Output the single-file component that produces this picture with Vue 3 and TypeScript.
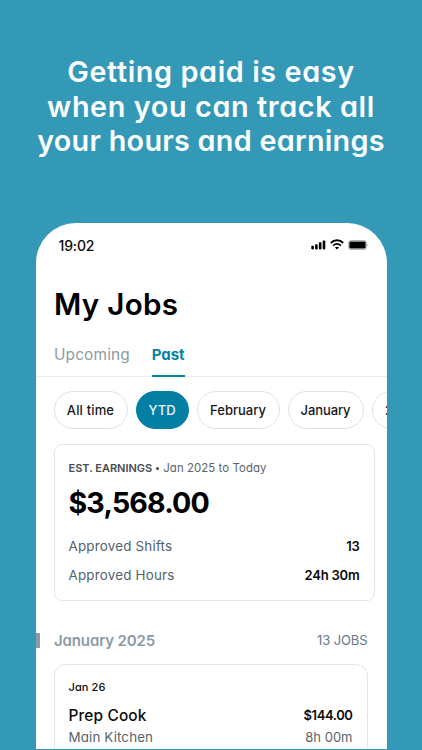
<script setup lang="ts">
interface Filter {
  label: string
  key: string
  active?: boolean
}

const headline: string[] = ['Getting paid is easy', 'when you can track all', 'your hours and earnings']

const filters: Filter[] = [
  { label: 'All time', key: 'all' },
  { label: 'YTD', key: 'ytd', active: true },
  { label: 'February', key: 'feb' },
  { label: 'January', key: 'jan' },
  { label: '2024', key: 'year' },
]

const totals = [
  { label: 'Approved Shifts', value: '13', key: 'shifts' },
  { label: 'Approved Hours', value: '24h 30m', key: 'hours' },
]
</script>

<template>
  <main class="page">
    <h1 class="headline">
      <span v-for="(line, i) in headline" :key="line" :class="['line', `line-${i + 1}`]">{{ line }}</span>
    </h1>

    <section class="phone">
      <header class="status">
        <span class="clock">19:02</span>
        <span class="indicators">
          <svg class="signal" width="15" height="10" viewBox="0 0 15 10">
            <rect x="0.3" y="5.8" width="2.6" height="3.6" rx="0.8" />
            <rect x="4.1" y="4.2" width="2.6" height="5.2" rx="0.8" />
            <rect x="7.9" y="2.3" width="2.6" height="7.1" rx="0.8" />
            <rect x="11.7" y="0.4" width="2.6" height="9" rx="0.8" />
          </svg>
          <svg class="wifi" width="14" height="11" viewBox="0 0 14 11">
            <path d="M0.8 4C4.3.4 9.7.4 13.2 4" />
            <path d="M3.2 6.6C5.4 4.5 8.6 4.5 10.8 6.6" />
            <path class="dot" d="M7 10.6 4.9 8.4C6 7.4 8 7.4 9.1 8.4Z" />
          </svg>
          <svg class="battery" width="21" height="10" viewBox="0 0 21 10">
            <rect x="0.6" y="0.5" width="17.8" height="9" rx="2.2" fill="#fff" stroke="#b5b5b5" stroke-width="1" />
            <rect x="1.4" y="1.4" width="16.2" height="7.2" rx="1.1" fill="#000" />
            <path d="M19.4 3.6c1.3.4 1.3 2.4 0 2.8z" fill="#b5b5b5" />
          </svg>
        </span>
      </header>

      <h2 class="title">My Jobs</h2>

      <nav class="tabs">
        <a class="tab upcoming">Upcoming</a>
        <a class="tab past">Past</a>
      </nav>

      <div class="filters">
        <button v-for="f in filters" :key="f.key" :class="['pill', f.key, { active: f.active }]">{{ f.label }}</button>
      </div>

      <article class="card earnings">
        <p class="caption">
          <strong>EST. EARNINGS</strong><i class="bullet"></i><span class="period">Jan 2025 to Today</span>
        </p>
        <p class="amount">$3,568.00</p>
        <p v-for="t in totals" :key="t.key" class="total">
          <span :class="['total-label', t.key]">{{ t.label }}</span>
          <b :class="['total-value', t.key]">{{ t.value }}</b>
        </p>
      </article>

      <div class="month">
        <i class="marker"></i>
        <h3>January 2025</h3>
        <span class="count">13 JOBS</span>
      </div>

      <article class="card job">
        <p class="date">Jan 26</p>
        <p class="row main"><span class="role">Prep Cook</span><b class="pay">$144.00</b></p>
        <p class="row sub"><span class="place">Main Kitchen</span><span class="duration">8h 00m</span></p>
      </article>
    </section>
  </main>
</template>

<style>
body {
  margin: 0;
  background: #3498b7;
}
</style>

<style scoped>
* {
  box-sizing: border-box;
}
p,
h1,
h2,
h3 {
  margin: 0;
  white-space: nowrap;
}
.page {
  width: 422px;
  height: 750px;
  overflow: hidden;
  display: flex;
  flex-direction: column;
  align-items: center;
  background: #3498b7;
  font-family: Inter, 'Liberation Sans', sans-serif;
  font-feature-settings: 'cv11' 1;
  color: #0b0b0c;
  border-bottom: 1px solid #3498b7;
}
.headline {
  flex: none;
  height: 223px;
  padding-top: 55px;
  color: #fafefe;
  font-size: 28.8px;
  font-weight: 600;
  line-height: 34.5px;
  letter-spacing: 0.6px;
  text-align: center;
}
.line {
  display: block;
}
.line-3 {
  letter-spacing: 0.26px;
}
.phone {
  flex: none;
  width: 351px;
  height: 526px;
  overflow: hidden;
  background: #fff;
  border-radius: 40px 40px 0 0;
}
.status {
  display: flex;
  justify-content: space-between;
  align-items: center;
  height: 45px;
  padding: 0 18px 0 23px;
}
.clock {
  font-size: 14px;
  font-weight: 500;
  letter-spacing: -0.15px;
}
.indicators {
  display: flex;
  align-items: center;
  gap: 4px;
  margin-top: -2px;
}
.indicators svg {
  display: block;
}
.wifi path {
  fill: none;
  stroke: #000;
  stroke-width: 2;
}
.wifi .dot {
  fill: #000;
  stroke: none;
}
.title {
  padding-left: 18.5px;
  margin-top: 17px;
  height: 38px;
  line-height: 38px;
  font-size: 29.6px;
  font-weight: 600;
  letter-spacing: 0.3px;
  color: #000;
}
.tabs {
  display: flex;
  gap: 22px;
  height: 54px;
  padding: 14px 0 0 18.5px;
  border-bottom: 1px solid #ededee;
}
.tab {
  height: 40px;
  line-height: 36px;
  font-size: 15.4px;
  letter-spacing: 0.15px;
  color: #8b9ba6;
}
.past {
  width: 33px;
  font-size: 15px;
  letter-spacing: -0.1px;
  color: #0682a5;
  font-weight: 700;
  border-bottom: 2px solid #0682a5;
  border-radius: 1px 1px 0 0;
}
.filters {
  display: flex;
  gap: 8px;
  margin: 14px 0 0 18px;
}
.pill {
  flex: none;
  height: 38px;
  padding: 0;
  border: 1px solid #dfe1e3;
  border-radius: 19px;
  background: #fff;
  font: inherit;
  font-feature-settings: normal;
  font-size: 13px;
  font-weight: 500;
  color: #17181a;
}
.pill.all {
  width: 74px;
  letter-spacing: 0.15px;
}
.pill.ytd {
  width: 53px;
}
.pill.feb {
  width: 83px;
}
.pill.jan {
  width: 76px;
  letter-spacing: -0.1px;
}
.pill.year {
  padding: 0 13px 0 12.5px;
}
.pill.active {
  background: #037fa3;
  border-color: #037fa3;
  color: #e8f6fa;
}
.card {
  border: 1px solid #e3e5e7;
  border-radius: 8px;
  background: #fff;
}
.earnings {
  width: 321px;
  height: 157px;
  margin: 15px 0 0 18px;
  padding: 15px 14px 0;
}
.caption {
  display: flex;
  align-items: center;
  height: 16px;
  font-size: 11px;
  color: #58646c;
}
.caption strong {
  font-weight: 600;
  color: #494b4e;
}
.period {
  font-size: 11.4px;
  letter-spacing: 0.08px;
}
.bullet {
  width: 3px;
  height: 3px;
  margin: 0 4px;
  border-radius: 50%;
  background: #494b4e;
}
.amount {
  height: 38px;
  margin: 8px 0 10px;
  line-height: 38px;
  font-size: 28.6px;
  font-weight: 700;
  letter-spacing: -0.85px;
  color: #000;
}
.total {
  display: flex;
  justify-content: space-between;
  height: 29px;
  line-height: 29px;
  font-size: 13px;
}
.total-label {
  font-size: 13.4px;
  letter-spacing: 0.2px;
  color: #51626d;
}
.total-value {
  font-weight: 600;
  letter-spacing: -0.2px;
}
.month {
  display: flex;
  align-items: center;
  height: 30px;
  margin-top: 24px;
  padding-right: 19px;
}
.marker {
  width: 4px;
  height: 15px;
  margin-right: 14.5px;
  background: #8b9ba6;
}
.month h3 {
  flex: 1;
  font-size: 15px;
  font-weight: 600;
  letter-spacing: -0.12px;
  color: #8b9ba6;
}
.count {
  font-size: 13px;
  letter-spacing: -0.1px;
  color: #66798a;
}
.job {
  width: 314px;
  height: 120px;
  margin: 9px 0 0 18px;
  padding: 13px 14px 0;
  border-radius: 12px;
}
.date {
  height: 18px;
  line-height: 18px;
  font-size: 11px;
  font-weight: 500;
  letter-spacing: 0.1px;
}
.row {
  display: flex;
  justify-content: space-between;
  align-items: center;
  height: 22px;
  font-size: 13px;
}
.main {
  margin-top: 8px;
}
.role {
  font-size: 15.4px;
  font-weight: 500;
  letter-spacing: 0.15px;
}
.pay {
  font-weight: 600;
  letter-spacing: -0.4px;
}
.sub {
  color: #58646c;
}
.place {
  font-size: 13.4px;
  letter-spacing: 0.12px;
}
</style>
